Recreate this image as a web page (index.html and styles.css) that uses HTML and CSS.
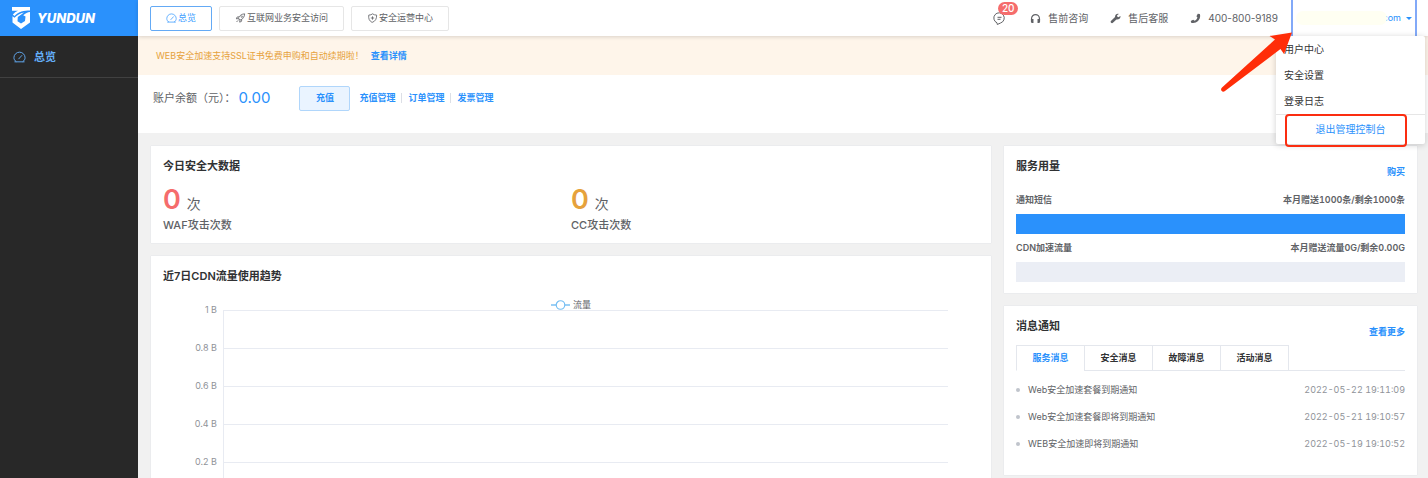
FILE: index.html
```html
<!DOCTYPE html>
<html lang="zh-CN">
<head>
<meta charset="utf-8">
<meta name="viewport" content="width=device-width, initial-scale=1">
<title>YUNDUN 总览</title>
<link rel="stylesheet" href="styles.css">
</head>
<body>
<svg class="sprite" aria-hidden="true">
  <symbol id="gauge" viewBox="0 0 14 12">
    <path d="M3.2 10.8C1.800 9.900 1 8.400 1 6.800a6 6 0 0 1 12 0c0 1.600-.8 3.100-2.200 4M2 11.200h10M6.200 8l3.300-3.600" fill="none" stroke="currentColor" stroke-linecap="round"/>
  </symbol>
</svg>
<div class="app">
  <aside class="sidebar">
    <a class="brand" href="#">
      <svg class="brand-mark" viewBox="0 0 18 22" aria-hidden="true">
        <path fill="#fff" d="M0 0h18v3.500c-6 .1-11.500 1-15.500 5.500L.8 7.600C2.200 6 4 4.600 6 3.800H0zM.5 9.200L2.500 10.800C5 8 8 6 12 5.400L5.800 10l-.3 4.200L9 16.500l4-2.500.5-4.500-2.300-1.300C13.500 6.200 15.500 5.200 18 5v10.500L9 22 .5 15.500z"/>
      </svg>
      <span class="brand-name">YUNDUN</span>
    </a>
    <nav>
      <a class="side-link" href="#"><svg class="side-icon" aria-hidden="true"><use href="#gauge"/></svg>总览</a>
    </nav>
  </aside>

  <div class="page">
    <header class="topbar">
      <nav class="views">
        <a class="view active" href="#"><svg class="view-icon" aria-hidden="true"><use href="#gauge"/></svg>总览</a>
        <a class="view" href="#"><svg class="view-icon" viewBox="0 0 12 12" aria-hidden="true"><path d="M4 7.800L3.800 5.500C5 3 7.500 1.200 11 1c-.2 3.500-2 6-4.500 7.200zM4 4.500L2 4.800 1 7l2.500-.3M7.500 8l-.3 2L5 11l.3-2.500M1.200 10.800l2-2" fill="none" stroke="currentColor" stroke-linejoin="round"/><circle cx="7.600" cy="4.400" r="1" fill="none" stroke="currentColor" stroke-width=".8"/></svg>互联网业务安全访问</a>
        <a class="view" href="#"><svg class="view-icon" viewBox="0 0 12 12" aria-hidden="true"><path d="M1.500 2.500C3.500 2.500 5 2 6 1c1.500 1 3 1.500 5 1.500C11 7 9.500 10 5.500 11.300 2.200 9.500 1 7 1.500 2.500zM6 4v4M4 6h4" fill="none" stroke="currentColor" stroke-linejoin="round"/></svg>安全运营中心</a>
      </nav>
      <div class="tools">
        <button class="inbox" type="button" aria-label="消息">
          <svg class="inbox-icon" viewBox="0 0 13 13" aria-hidden="true"><path d="M4 10.800A5.200 5.200 0 1 1 7.500 11L4.300 12.500zM4.500 5.300h4M4.500 7.300h3" fill="none" stroke="currentColor" stroke-linejoin="round"/></svg>
          <span class="badge">20</span>
        </button>
        <a class="tool" href="#"><svg class="tool-icon" viewBox="0 0 12 12" aria-hidden="true"><path d="M1.700 8V6a4.300 4.300 0 0 1 8.600 0v2" fill="none" stroke="currentColor" stroke-width="1.300"/><path d="M1 6.500h2.800V11H2.500A1.500 1.500 0 0 1 1 9.500zM8.200 6.500H11v3A1.500 1.500 0 0 1 9.500 11H8.200z" fill="currentColor"/></svg>售前咨询</a>
        <a class="tool" href="#"><svg class="tool-icon" viewBox="0 0 12 12" aria-hidden="true"><path d="M11.300 3.200L9.200 4.700 7.600 3.500l.2-1L9.600 1C7.800.3 5.300 1.500 5.500 4.400L1 8.700C-.1 10 1.800 12 3.200 10.700L7 7c2.900.4 5-1.500 4.300-3.800z" fill="currentColor"/></svg>售后客服</a>
        <a class="tool" href="tel:400-800-9189"><svg class="tool-icon" viewBox="0 0 12 12" aria-hidden="true"><path d="M8.500.8l2.200.3C12.500 6.500 7.500 12.200 1.500 10.800L.8 8.600l2.700-1.300L5 8.500C6.500 7.900 7.700 6.600 8.100 5L7 3.600z" fill="currentColor"/></svg>400-800-9189</a>
        <div class="account">
          <button class="account-toggle" type="button" aria-expanded="true"><span class="account-mask"></span><span>com</span><span class="caret"></span></button>
          <div class="menu">
            <a class="menu-item" href="#">用户中心</a>
            <a class="menu-item" href="#">安全设置</a>
            <a class="menu-item" href="#">登录日志</a>
            <a class="menu-exit" href="#">退出管理控制台</a>
          </div>
          <svg class="pointer" viewBox="0 0 74 62" aria-hidden="true"><path d="M72 1.500L49.500 5l5.500 3.500L2 56.500c-2.500 2.500.5 5.500 3 3.500l55.500-42 3.500 5z" fill="#ff2d08"/></svg>
        </div>
      </div>
    </header>

    <section class="notice">WEB安全加速支持SSL证书免费申购和自动续期啦！<a class="link" href="#">查看详情</a></section>

    <section class="balance">
      <span>账户余额（元）：</span><span class="amount">0.00</span>
      <button class="recharge" type="button">充值</button>
      <nav class="balance-links">
        <a class="link" href="#">充值管理</a>
        <a class="link" href="#">订单管理</a>
        <a class="link" href="#">发票管理</a>
      </nav>
    </section>

    <main class="board">
      <div class="column">
        <section class="card summary">
          <h2 class="title">今日安全大数据</h2>
          <div class="stats">
            <div><p class="figure"><b class="count waf">0</b>次</p><p class="stat-name">WAF攻击次数</p></div>
            <div><p class="figure"><b class="count cc">0</b>次</p><p class="stat-name">CC攻击次数</p></div>
          </div>
        </section>
        <section class="card trend">
          <h2 class="title">近7日CDN流量使用趋势</h2>
          <div class="legend"><svg class="legend-mark" viewBox="0 0 20 12" aria-hidden="true"><path d="M0 6h20" stroke="#73bdf2" stroke-width="1.500"/><circle cx="10" cy="6" r="4.500" fill="#fff" stroke="#73bdf2" stroke-width="1.200"/></svg>流量</div>
          <div class="chart">
            <div class="tick"><span class="tick-name">1 B</span><span class="plot"></span></div>
            <div class="tick"><span class="tick-name">0.8 B</span><span class="plot"></span></div>
            <div class="tick"><span class="tick-name">0.6 B</span><span class="plot"></span></div>
            <div class="tick"><span class="tick-name">0.4 B</span><span class="plot"></span></div>
            <div class="tick last"><span class="tick-name">0.2 B</span><span class="plot"></span></div>
          </div>
        </section>
      </div>

      <div class="column">
        <section class="card">
          <div class="card-head"><h2 class="title">服务用量</h2><a class="link" href="#">购买</a></div>
          <div class="usage"><span>通知短信</span><span>本月赠送1000条/剩余1000条</span></div>
          <div class="bar full"></div>
          <div class="usage"><span>CDN加速流量</span><span>本月赠送流量0G/剩余0.00G</span></div>
          <div class="bar"></div>
        </section>
        <section class="card news">
          <div class="card-head"><h2 class="title">消息通知</h2><a class="link" href="#">查看更多</a></div>
          <div class="tabs" role="tablist">
            <button class="tab selected" type="button" role="tab" aria-selected="true">服务消息</button>
            <button class="tab" type="button" role="tab" aria-selected="false">安全消息</button>
            <button class="tab" type="button" role="tab" aria-selected="false">故障消息</button>
            <button class="tab" type="button" role="tab" aria-selected="false">活动消息</button>
          </div>
          <ul class="messages">
            <li class="message"><a class="subject" href="#">Web安全加速套餐到期通知</a><time class="time">2022-05-22 19:11:09</time></li>
            <li class="message"><a class="subject" href="#">Web安全加速套餐即将到期通知</a><time class="time">2022-05-21 19:10:57</time></li>
            <li class="message"><a class="subject" href="#">WEB安全加速即将到期通知</a><time class="time">2022-05-19 19:10:52</time></li>
          </ul>
        </section>
      </div>
    </main>
  </div>
</div>
</body>
</html>
```

FILE: styles.css
```css
* { box-sizing: border-box; }
body {
  margin: 0;
  background: #f1f1f1;
  color: #606266;
  font: 9px/14px Inter, "Noto Sans CJK SC", sans-serif;
}
h2, p, ul { margin: 0; padding: 0; }
a { color: inherit; text-decoration: none; }
button { font: inherit; color: inherit; padding: 0; border: 0; background: none; cursor: pointer; }
.sprite { display: none; }
.link { color: #2a91fc; font-weight: 600; }

.app { display: grid; grid-template-columns: 138px minmax(0, 1fr); min-height: 100vh; }
.page { display: flex; flex-direction: column; }

/* Sidebar */
.sidebar { background: #282828; }
.brand { display: flex; align-items: center; gap: 7px; height: 36px; padding-left: 12px; background: #2a91fc; color: #fff; }
.brand-mark { width: 18px; height: 22px; }
.brand-name { font-size: 13px; font-weight: 800; font-style: italic; }
.side-link { display: flex; align-items: center; gap: 8px; height: 42px; padding-left: 13px; border-bottom: 1px solid #414141; color: #64aef8; font-size: 11px; font-weight: 600; }
.side-icon { width: 13px; height: 12px; }

/* Top bar */
.topbar { position: relative; z-index: 2; display: flex; justify-content: space-between; height: 36px; padding: 0 11px 0 12px; background: #fff; box-shadow: 0 1px 4px rgba(0, 0, 0, .15); }
.views { display: flex; align-items: center; gap: 7px; }
.view { display: flex; align-items: center; gap: 1px; height: 25px; padding: 0 15px; border: 1px solid #e6e6e6; border-radius: 2px; }
.view.active { border-color: #64aaf5; color: #409eff; }
.view-icon { width: 11px; height: 10px; }
.tools { display: flex; align-items: center; font-size: 10px; }
.inbox { position: relative; display: flex; margin-right: 24px; }
.inbox-icon { width: 13px; height: 13px; }
.badge { position: absolute; left: 5px; top: -10px; min-width: 20px; padding: 0 3px; border-radius: 7px; background: #f56c6c; color: #fff; font-size: 10px; font-weight: 500; line-height: 13px; }
.tool { display: flex; align-items: center; gap: 7px; margin-right: 22px; }
.tool:nth-of-type(3) { margin-right: 13px; }
.tool-icon { width: 11px; height: 11px; }
.account { position: relative; width: 126px; height: 36px; }
.account-toggle { display: flex; align-items: center; width: 100%; height: 36px; padding-right: 2px; border: solid #82a9f8; border-width: 0 2px; color: #2a91fc; font-size: 9px; }
.account-mask { z-index: 1; flex: 1; height: 14px; margin: 0 -4px 0 3px; border-radius: 7px; background: #fffff2; }
.caret { margin: 0 1px 0 5px; border: 3px solid transparent; border-top-color: #2a91fc; border-bottom: 0; }
.menu { position: absolute; top: 36px; right: -8px; width: 149px; border-radius: 2px; background: #fff; box-shadow: 0 1px 6px rgba(0, 0, 0, .18); color: #333; line-height: 26px; }
.menu-item { display: block; padding-left: 8px; }
.menu-exit { position: relative; display: block; border-top: 1px solid #e6e6e6; color: #2a91fc; line-height: 29px; text-align: center; }
.menu-exit::after { content: ""; position: absolute; inset: -1px 18px -3px 9px; border: 2px solid #fb2d10; border-radius: 4px; }
.pointer { position: absolute; left: -71px; top: 31px; width: 74px; height: 62px; pointer-events: none; }

/* Notice and balance */
.notice { display: flex; align-items: center; gap: 7px; height: 39px; padding-left: 18px; background: #fef5ea; color: #e6a23c; }
.balance { display: flex; align-items: center; height: 58px; padding: 0 15px 12px; background: #fff; font-size: 11px; }
.amount { margin-left: 3px; color: #2a91fc; font-size: 15px; }
.recharge { width: 51px; height: 25px; margin: 0 9px 0 29px; border: 1px solid #b0d6fb; border-radius: 2px; background: #eaf4ff; color: #2a91fc; font-size: 9px; font-weight: 600; }
.balance-links { display: flex; font-size: 9px; line-height: 10px; }
.balance-links .link + .link { margin-left: 6px; padding-left: 6px; border-left: 1px solid #dcdfe6; }

/* Cards */
.board { flex: 1; display: grid; grid-template-columns: minmax(0, 840fr) minmax(0, 413fr); gap: 13px; padding: 13px 11px 0 13px; }
.column { display: flex; flex-direction: column; gap: 13px; }
.card { padding: 12px 12px 11px; background: #fff; box-shadow: 0 0 1px rgba(60, 80, 140, .18); }
.title { color: #303133; font-size: 11px; line-height: 16px; font-weight: 600; }
.card-head { display: flex; justify-content: space-between; line-height: 27px; }
.summary { padding-bottom: 10px; }
.stats { display: grid; grid-template-columns: 1fr 1fr; margin-top: 9px; }
.figure { display: flex; align-items: baseline; gap: 6px; height: 34px; font-size: 14px; line-height: 34px; }
.count { font-size: 27px; font-weight: 600; }
.waf { color: #f56c6c; }
.cc { color: #e6a23c; }
.stat-name { font-size: 11px; line-height: 16px; font-weight: 500; }

/* Trend chart */
.trend { flex: 1; display: flex; flex-direction: column; padding-bottom: 0; }
.legend { display: flex; align-items: center; justify-content: center; gap: 3px; margin-top: 15px; line-height: 12px; }
.legend-mark { width: 19px; height: 12px; }
.chart { flex: 1; display: flex; flex-direction: column; margin-top: -1px; padding-right: 31px; }
.tick { display: flex; gap: 6px; height: 38px; }
.last { flex: 1; }
.tick-name { width: 54px; margin-top: -6px; color: #909399; line-height: 12px; text-align: right; }
.plot { flex: 1; border: solid #e8ebf2; border-width: 1px 0 0 1px; }

/* Usage */
.usage { display: flex; justify-content: space-between; margin: 8px 0 7px; font-weight: 600; font-variant-numeric: tabular-nums; }
.bar { height: 20px; background: #ebeef5; }
.bar + .usage { margin-top: 7px; }
.full { background: #2a91fc; }

/* Messages */
.news { padding-bottom: 18px; }
.tabs { display: flex; height: 26px; border-bottom: 1px solid #e4e7ed; }
.tab { width: 68px; height: 26px; border: solid #e4e7ed; border-width: 1px 0 1px 1px; color: #303133; font-weight: 600; }
.tab:last-child { width: 69px; border-right-width: 1px; }
.selected { border-bottom-color: #fff; color: #2a91fc; }
.messages { margin-top: 5px; list-style: none; }
.message { display: flex; align-items: center; gap: 8px; line-height: 27px; }
.message::before { content: ""; width: 4px; height: 4px; border-radius: 50%; background: #c0c4cc; }
.time { margin-left: auto; color: #909399; font-variant-numeric: tabular-nums; }
```
